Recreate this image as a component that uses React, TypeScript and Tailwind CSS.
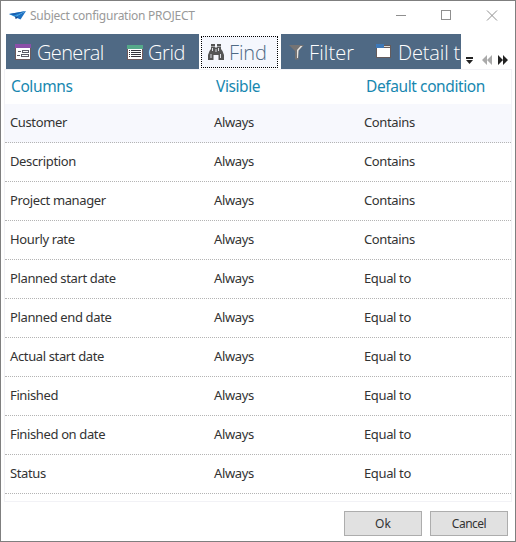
import React from "react";

const rows: [string, string, string][] = [
  ["Customer", "Always", "Contains"],
  ["Description", "Always", "Contains"],
  ["Project manager", "Always", "Contains"],
  ["Hourly rate", "Always", "Contains"],
  ["Planned start date", "Always", "Equal to"],
  ["Planned end date", "Always", "Equal to"],
  ["Actual start date", "Always", "Equal to"],
  ["Finished", "Always", "Equal to"],
  ["Finished on date", "Always", "Equal to"],
  ["Status", "Always", "Equal to"],
];

function Logo() {
  return (
    <svg width="17" height="10" viewBox="0 0 17 10">
      <path d="M0 3 17 0 6 6Z" fill="#2f9be0" />
      <path d="M0 3 17 0 5 4.5Z" fill="#1c5fb0" />
      <path d="M6 6 17 0 11.5 8.5Z" fill="#1c70c2" />
      <path d="M6 5 6.6 8 9 6.8Z" fill="#123f80" />
    </svg>
  );
}

function FormIcon() {
  return (
    <svg width="16" height="16" viewBox="0 0 16 16" shapeRendering="crispEdges">
      <path d="M0 4h16v12H0z" fill="#6e5a5c" />
      <path d="M1 4h14v11H1z" fill="#fff" />
      <path d="M0 0h16v4H0z" fill="#8b4fa8" />
      <path d="M3 7h3v1H3zM2 11h3v1H2z" fill="#5b5b66" />
      <path d="M7.5 6.5h6v2h-6zM6.500 10.500h7v2h-7z" fill="#fff" stroke="#5b5b66" />
    </svg>
  );
}

function ListIcon() {
  return (
    <svg width="16" height="15" viewBox="0 0 16 15" shapeRendering="crispEdges">
      <path d="M0 4h16v11H0z" fill="#6e5a5c" />
      <path d="M1 4h14v10H1z" fill="#fff" />
      <path d="M0 0h16v4H0z" fill="#55a98a" />
      <path d="M2 5h1v1H2zM4 5h10v1H4zM2 7h1v1H2zM4 7h10v1H4zM2 9h1v1H2zM4 9h10v1H4zM2 11h1v1H2zM4 11h10v1H4z" fill="#33333b" />
    </svg>
  );
}

function BinocularsIcon() {
  return (
    <svg width="16" height="16" viewBox="0 0 16 16" fill="#555">
      <path d="M3 0h4v2H3zM9 0h4v2H9z" />
      <path d="M3 2.500h4v1h2v-1h4V5l1.500 2L16 11v5h-5.500v-5h-5v5H0v-5l1.500-4L3 5z" />
      <path d="M4 4h1v3H4zM10 4h1v3h-1zM2.500 10h1v4h-1zM12 10h1v4h-1zM7.500 5h1v3h-1z" fill="#f5f7fd" opacity=".85" />
    </svg>
  );
}

function FunnelIcon() {
  return (
    <svg width="15" height="15" viewBox="0 0 15 15">
      <path d="M0 0h15L9.500 6v8.500H6V6z" fill="#757373" />
      <path d="M11.500 1h2L9.500 5.500 9 13H8V5z" fill="#e9e7e3" />
    </svg>
  );
}

function FolderIcon() {
  return (
    <svg width="15" height="14" viewBox="0 0 15 14" shapeRendering="crispEdges">
      <path d="M0 3h8V1h7v13H0z" fill="#655b5b" />
      <path d="M1 4h13v9H1z" fill="#fff" />
      <path d="M8 2h6v1H8z" fill="#ddd" />
      <path d="M0 0h8v4H0z" fill="#3d78b8" />
    </svg>
  );
}

function TitleBar() {
  return (
    <header className="flex h-[33px] items-start pl-2 text-[#999]">
      <div className="pt-[10px]"><Logo /></div>
      <h1 className="ml-1 pt-[6px] w-[341px] whitespace-nowrap text-[12px] leading-[18px] tracking-[-0.25px] font-normal">
        Subject configuration PROJECT
      </h1>
      <svg className="ml-[25px] mt-[9px]" width="102" height="11" viewBox="0 0 102 11" fill="none" stroke="#8f8f8f">
        <path d="M0 5.500h10M45.500.5h9v9h-9z" shapeRendering="crispEdges" />
        <path d="m91 .5 10 10m0-10-10 10" />
      </svg>
    </header>
  );
}

function TabStrip() {
  return (
    <nav className="ml-[5px] flex h-[35px] font-['Open_Sans','Noto_Sans',sans-serif] text-[20px] leading-[35px] font-light whitespace-nowrap text-white">
      <div className="flex w-[455px]">
        <div className="flex w-[193px] shrink-0 bg-[#4f6984]">
          <div className="ml-[9px] mt-[10px] w-[22px]"><FormIcon /></div>
          <span className="w-[90px] pt-px tracking-[-0.65px]">General</span>
          <div className="mt-[11px] w-[21px]"><ListIcon /></div>
          <span className="pt-px tracking-[-0.4px]">Grid</span>
        </div>
        <div className="w-[82px] shrink-0 pl-[2px] pt-[2px]">
          <div className="flex h-8 w-[77px] border border-dotted border-black bg-[#f5f7fd] text-[#4f6984]">
            <div className="ml-[6px] mt-[7px] w-[21px]"><BinocularsIcon /></div>
            <span className="-mt-[2px] tracking-[-0.1px]">Find</span>
          </div>
        </div>
        <div className="flex w-[180px] shrink-0 bg-[#4f6984]">
          <div className="ml-[8px] mt-[11px] w-[20px] shrink-0"><FunnelIcon /></div>
          <span className="w-[67px] shrink-0 pt-px tracking-[0.1px]">Filter</span>
          <div className="mt-[10px] w-[22px] shrink-0"><FolderIcon /></div>
          <span className="pt-px tracking-[-0.15px]">Detail t</span>
        </div>
      </div>
      <svg className="ml-[5px] mt-[21px]" width="43" height="11" viewBox="0 0 43 11" fill="#222">
        <path d="M0 2h7v2H0zM0 5h7L3.500 9z" />
        <path d="M16 5l5-5v10zM21 5l5-5v10z" fill="#aaa" />
        <path d="M32 0l5 5-5 5zM37 0l5 5-5 5z" />
      </svg>
    </nav>
  );
}

export default function App() {
  return (
    <main className="flex h-[542px] w-[516px] flex-col border border-[#7f7f7f] bg-white font-['Noto_Sans','Open_Sans',sans-serif]">
      <TitleBar />
      <TabStrip />
      <section className="ml-[3px] h-[433px] w-[508px] border border-[#f2f2f6]">
        <div className="grid h-[34px] grid-cols-[205px_150px_1fr] pl-[6px] pt-[4px] text-[15.500px] leading-6 tracking-[-0.4px] text-[#1787b0]">
          <span>Columns</span>
          <span>Visible</span>
          <span>Default condition</span>
        </div>
        {rows.map(([name, visible, condition], i) => (
          <div
            key={name}
            className={`grid h-[39px] grid-cols-[204px_150px_1fr] border-b border-dotted border-[#b4b4b4] pl-[5px] pt-[8px] text-[13px] leading-5 tracking-[-0.37px] text-[#333] ${i === 0 ? "bg-[#f7f8fd]" : ""}`}
          >
            <span>{name}</span>
            <span>{visible}</span>
            <span>{condition}</span>
          </div>
        ))}
      </section>
      <footer className="flex gap-2 pl-[343px] pt-[9px] text-[12px] text-[#333]">
        <button className="h-[25px] w-[78px] border border-[#adadad] bg-[#e1e1e1]">Ok</button>
        <button className="h-[25px] w-[78px] border border-[#adadad] bg-[#e1e1e1] tracking-[-0.5px]">Cancel</button>
      </footer>
    </main>
  );
}
